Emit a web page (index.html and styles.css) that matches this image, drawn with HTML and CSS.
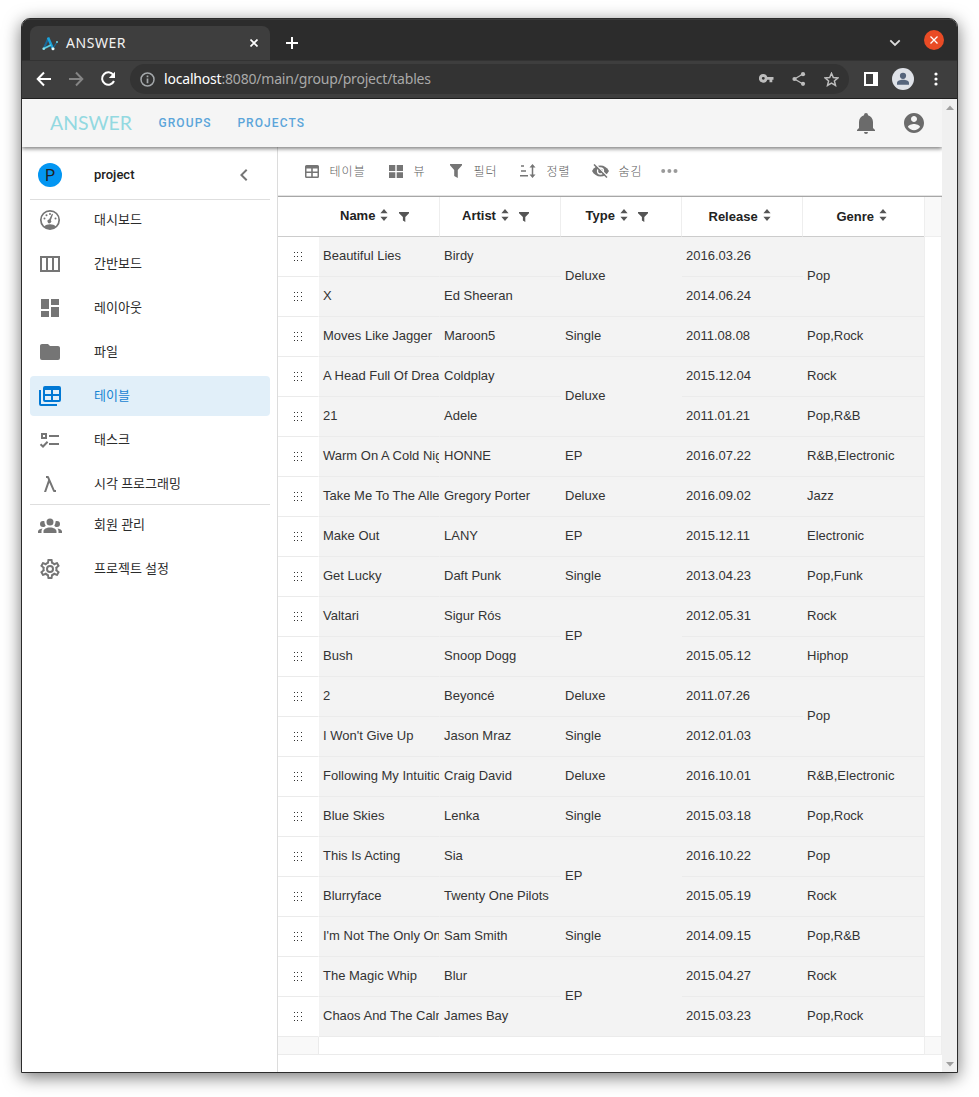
FILE: index.html
```html
<!DOCTYPE html>
<html lang="ko">
<head>
<meta charset="utf-8">
<title>ANSWER</title>
<link rel="stylesheet" href="styles.css">
</head>
<body>
<svg class="defs" aria-hidden="true">
  <symbol id="sort" viewBox="0 0 8 12"><path d="M4 0L7.6 4.2H.4zM4 12L7.6 7.8H.4z"/></symbol>
  <symbol id="funnel" viewBox="0 0 12 14"><path d="M0 0H12V1.2L7.8 6V14L4.2 12V6L0 1.2z"/></symbol>
  <symbol id="funnel-small" viewBox="0 0 10 10"><path d="M0 0H10V1.2L6.3 5V10L3.900 8.500V5L0 1.200z"/></symbol>
  <symbol id="grip" viewBox="0 0 8 10"><path d="M0 0h1v1H0zM3 0h1v1H3zM7 0h1v1H7zM0 4h1v1H0zM3 4h1v1H3zM7 4h1v1H7zM0 8h1v1H0zM3 8h1v1H3zM7 8h1v1H7z"/></symbol>
</svg>
<div class="window">
  <div class="tabstrip">
    <div class="tab">
      <svg class="favicon" width="17" height="15" viewBox="0 0 17 15"><path d="M2 12L6.500 2" fill="none" stroke="#17699a" stroke-width="2"/><path d="M6 1.500L10.800 12.500" fill="none" stroke="#1ba3dc" stroke-width="2.600"/><path d="M1.500 12.800L9 9" stroke="#59cfe6" stroke-width="1.800"/><path d="M11 12.500L15 6" stroke="#176a96" stroke-width="1.200"/><circle cx="1.700" cy="12.800" r="1.300" fill="#8fe4ef"/><circle cx="11" cy="12.800" r="1.500" fill="#e9ffff"/><circle cx="15" cy="6" r="1.100" fill="#6cd"/></svg>
      <span class="tab-title">ANSWER</span>
      <svg class="tab-close" width="8" height="8" viewBox="0 0 8 8"><path d="M.5.5l7 7M7.500.5l-7 7" stroke="#fff" stroke-width="1.700"/></svg>
    </div>
    <svg class="tab-new" width="12" height="12" viewBox="0 0 12 12"><path d="M6 0v12M0 6h12" stroke="#fff" stroke-width="2"/></svg>
    <svg class="tab-menu" width="12" height="8" viewBox="0 0 12 8"><path d="M1.300 1.300L6 6l4.700-4.700" fill="none" stroke="#ddd" stroke-width="1.800"/></svg>
    <span class="win-close"><svg width="8" height="8" viewBox="0 0 8 8"><path d="M.5.5l7 7M7.500.5l-7 7" stroke="#fff" stroke-width="1.300"/></svg></span>
  </div>
  <div class="navbar">
    <svg class="nav-back" width="16" height="16" viewBox="0 0 16 16"><path d="M15 8H2M8 1.500L1.700 8 8 14.500" fill="none" stroke="#fff" stroke-width="2"/></svg>
    <svg class="nav-fwd" width="16" height="16" viewBox="0 0 16 16"><path d="M1 8h13M8 1.500L14.300 8 8 14.500" fill="none" stroke="#858585" stroke-width="2"/></svg>
    <svg class="nav-reload" width="16" height="16" viewBox="0 0 16 16"><path d="M13.400 4A6.200 6.200 0 1 0 14 10" fill="none" stroke="#fff" stroke-width="2"/><path d="M15 .8V7H8.800z" fill="#fff"/></svg>
    <div class="omnibox">
      <svg class="info" width="15" height="15" viewBox="0 0 15 15"><circle cx="7.500" cy="7.500" r="6.500" fill="none" stroke="#a3a7aa" stroke-width="1.500"/><path d="M7.500 6.500V11.300M7.500 3.500v1.700" stroke="#a3a7aa" stroke-width="1.700"/></svg>
      <span class="url"><b>localhost</b>:8080/main/group/project/tables</span>
      <svg class="key" width="15" height="9" viewBox="0 0 15 9"><path fill="#bdbdbd" fill-rule="evenodd" d="M4.300 0a4.300 4.300 0 1 0 4 5.700H10.500V8.300H13.300V5.700H14.500V3H8.300A4.300 4.300 0 0 0 4.300 0zm0 2.900a1.400 1.400 0 1 1 0 2.900 1.400 1.400 0 0 1 0-2.900z"/></svg>
      <svg class="share" width="14" height="14" viewBox="0 0 14 14"><path d="M11 2L2.500 7 11 12" fill="none" stroke="#bdbdbd" stroke-width="1.300"/><g fill="#bdbdbd"><circle cx="11" cy="2.200" r="2.100"/><circle cx="2.500" cy="7" r="2.100"/><circle cx="11" cy="11.800" r="2.100"/></g></svg>
      <svg class="star" width="15" height="15" viewBox="0 0 15 15"><path d="M7.500 1.300l1.800 4.200 4.600.4-3.500 3 1.100 4.500-4-2.400-4 2.400 1.100-4.500-3.500-3 4.600-.4z" fill="none" stroke="#bdbdbd" stroke-width="1.500"/></svg>
    </div>
    <svg class="side" width="14" height="14" viewBox="0 0 14 14"><path fill="#fff" fill-rule="evenodd" d="M0 0h14v14H0zM2 2v10h7V2z"/></svg>
    <svg class="profile" width="22" height="22" viewBox="0 0 22 22"><circle cx="11" cy="11" r="11" fill="#dfe2e8"/><circle cx="11" cy="7.800" r="3.100" fill="#56657c"/><path d="M5 16.700V15c0-2 3-3.200 6-3.200s6 1.200 6 3.200v1.700z" fill="#56657c"/></svg>
    <svg class="dots" width="4" height="14" viewBox="0 0 4 14"><g fill="#fff"><circle cx="2" cy="2" r="1.600"/><circle cx="2" cy="7" r="1.600"/><circle cx="2" cy="12" r="1.600"/></g></svg>
  </div>
  <div class="viewport">
    <div class="page">
      <header class="appbar">
        <svg class="logo" width="84" height="20" viewBox="0 0 84 20"><text x="0" y="17" textLength="82" lengthAdjust="spacingAndGlyphs">ANSWER</text></svg>
        <a class="link">GROUPS</a>
        <a class="link">PROJECTS</a>
        <svg class="bell" width="24" height="24" viewBox="0 0 24 24"><path d="M21 19V20H3V19L5 17V11C5 7.900 7.030 5.170 10 4.290V4A2 2 0 0 1 14 4V4.290C16.970 5.170 19 7.900 19 11V17L21 19M14 21A2 2 0 0 1 10 21"/></svg>
        <svg class="account" width="24" height="24" viewBox="0 0 24 24"><path d="M12 2C6.480 2 2 6.480 2 12s4.480 10 10 10 10-4.480 10-10S17.520 2 12 2zm0 3c1.660 0 3 1.340 3 3s-1.340 3-3 3-3-1.340-3-3 1.340-3 3-3zm0 14.200c-2.500 0-4.710-1.280-6-3.220.03-1.990 4-3.080 6-3.080 1.990 0 5.970 1.090 6 3.080-1.290 1.940-3.500 3.220-6 3.220z"/></svg>
      </header>
      <div class="body">
        <nav class="sidebar">
          <div class="project"><span class="avatar">P</span><span class="pname">project</span><svg width="24" height="24" viewBox="0 0 24 24"><path d="M15.410 16.580L10.830 12L15.410 7.410L14 6L8 12L14 18z"/></svg></div>
          <div class="group">
            <a class="item"><svg width="24" height="24" viewBox="0 0 24 24"><circle cx="12" cy="12" r="9.200" fill="none" stroke="#757575" stroke-width="1.700"/><path d="M6 18.500C9 15.500 15 15.500 18 18.500 15 22 9 22 6 18.500z"/><path d="M15 6.200L12.900 12.200A1.900 1.900 0 1 1 11.100 11.500L14 5.700z"/><circle cx="6.500" cy="10.500" r="1"/><circle cx="8.500" cy="7.300" r="1"/><circle cx="12" cy="6" r="1"/><circle cx="17.500" cy="10.500" r="1"/></svg>대시보드</a>
            <a class="item"><svg width="24" height="24" viewBox="0 0 24 24"><path d="M3 5H21V19H3zM9 5V19M15 5V19" fill="none" stroke="#757575" stroke-width="2"/></svg>간반보드</a>
            <a class="item"><svg width="24" height="24" viewBox="0 0 24 24"><path d="M13 3V9H21V3M13 21H21V11H13M3 21H11V15H3M3 13H11V3H3z"/></svg>레이아웃</a>
            <a class="item"><svg width="24" height="24" viewBox="0 0 24 24"><path d="M10 4H4C2.890 4 2 4.890 2 6V18A2 2 0 0 0 4 20H20A2 2 0 0 0 22 18V8C22 6.890 21.100 6 20 6H12z"/></svg>파일</a>
            <a class="item active"><svg width="24" height="24" viewBox="0 0 24 24"><path fill-rule="evenodd" d="M7 2H21A2 2 0 0 1 23 4V16A2 2 0 0 1 21 18H7A2 2 0 0 1 5 16V4A2 2 0 0 1 7 2zM7 6V10H13V6zM15 6V10H21V6zM7 12V16H13V12zM15 12V16H21V12z"/><path d="M1 6H3V20H19V22H3A2 2 0 0 1 1 20z"/></svg>테이블</a>
            <a class="item"><svg width="24" height="24" viewBox="0 0 24 24"><path fill-rule="evenodd" d="M3 5H9V11H3zM5 7V9H7V7zM11 7H21V9H11zM11 15H21V17H11z"/><path d="M2.500 16.200L5 18.500 9.600 13.800" fill="none" stroke="#757575" stroke-width="2"/></svg>태스크</a>
            <a class="item"><svg width="24" height="24" viewBox="0 0 24 24"><path d="M6 20L10.160 7.910L9.340 6H8V4H10C10.420 4 10.780 4.260 10.930 4.630L16.660 18H18V20H16C15.570 20 15.210 19.730 15.070 19.360L11.330 10.650L8.120 20z"/></svg>시각 프로그래밍</a>
          </div>
          <div class="group admin">
            <a class="item"><svg width="24" height="24" viewBox="0 0 24 24"><path d="M12,5.5A3.5,3.5 0 0,1 15.5,9A3.5,3.5 0 0,1 12,12.5A3.5,3.5 0 0,1 8.5,9A3.5,3.5 0 0,1 12,5.5M5,8C5.56,8 6.08,8.15 6.53,8.42C6.38,9.85 6.8,11.27 7.66,12.38C7.16,13.34 6.16,14 5,14A3,3 0 0,1 2,11A3,3 0 0,1 5,8M19,8A3,3 0 0,1 22,11A3,3 0 0,1 19,14C17.84,14 16.84,13.34 16.34,12.38C17.2,11.27 17.62,9.85 17.47,8.42C17.92,8.15 18.44,8 19,8M5.5,18.25C5.5,16.18 8.41,14.5 12,14.5C15.59,14.5 18.5,16.18 18.5,18.25V20H5.5V18.25M0,20V18.5C0,17.11 1.89,15.94 4.45,15.6C3.86,16.28 3.5,17.22 3.5,18.25V20H0M24,20H20.5V18.25C20.5,17.22 20.14,16.28 19.55,15.6C22.11,15.94 24,17.11 24,18.5V20Z"/></svg>회원 관리</a>
            <a class="item"><svg width="24" height="24" viewBox="0 0 24 24"><path d="M12,8A4,4 0 0,1 16,12A4,4 0 0,1 12,16A4,4 0 0,1 8,12A4,4 0 0,1 12,8M12,10A2,2 0 0,0 10,12A2,2 0 0,0 12,14A2,2 0 0,0 14,12A2,2 0 0,0 12,10M10,22C9.75,22 9.54,21.82 9.5,21.58L9.13,18.93C8.5,18.68 7.96,18.34 7.44,17.94L4.95,18.95C4.73,19.03 4.46,18.95 4.34,18.73L2.34,15.27C2.21,15.05 2.27,14.78 2.46,14.63L4.57,12.97L4.5,12L4.57,11L2.46,9.37C2.27,9.22 2.21,8.95 2.34,8.73L4.34,5.27C4.46,5.05 4.73,4.96 4.95,5.05L7.44,6.05C7.96,5.66 8.5,5.32 9.13,5.07L9.5,2.42C9.54,2.18 9.75,2 10,2H14C14.25,2 14.46,2.18 14.5,2.42L14.87,5.07C15.5,5.32 16.04,5.66 16.56,6.05L19.05,5.05C19.27,4.96 19.54,5.05 19.66,5.27L21.66,8.73C21.79,8.95 21.73,9.22 21.54,9.37L19.43,11L19.5,12L19.43,13L21.54,14.63C21.73,14.78 21.79,15.05 21.66,15.27L19.66,18.73C19.54,18.95 19.27,19.04 19.05,18.95L16.56,17.95C16.04,18.34 15.5,18.68 14.87,18.93L14.5,21.58C14.46,21.82 14.25,22 14,22H10M11.25,4L10.88,6.61C9.68,6.86 8.62,7.5 7.85,8.39L5.44,7.35L4.69,8.65L6.8,10.2C6.4,11.37 6.4,12.64 6.8,13.8L4.68,15.36L5.43,16.66L7.86,15.62C8.63,16.5 9.68,17.14 10.87,17.38L11.24,20H12.76L13.13,17.39C14.32,17.14 15.37,16.5 16.14,15.62L18.57,16.66L19.32,15.36L17.2,13.81C17.6,12.64 17.6,11.37 17.2,10.2L19.31,8.65L18.56,7.35L16.15,8.39C15.38,7.5 14.32,6.86 13.12,6.62L12.75,4H11.25Z"/></svg>프로젝트 설정</a>
          </div>
        </nav>
        <main class="main">
          <div class="toolbar">
            <span class="tool t-table"><svg width="14" height="13" viewBox="0 0 14 13"><path fill-rule="evenodd" d="M1.500 0H12.500A1.500 1.500 0 0 1 14 1.500V11.500A1.500 1.500 0 0 1 12.500 13H1.500A1.500 1.500 0 0 1 0 11.500V1.500A1.500 1.500 0 0 1 1.500 0zM1.500 3.500V6.500H6.200V3.500zM7.800 3.500V6.500H12.500V3.500zM1.500 8V11.500H6.200V8zM7.800 8V11.500H12.500V8z"/></svg><span>테이블</span></span>
            <span class="tool t-view"><svg width="14" height="13" viewBox="0 0 14 13"><path d="M0 0H6.300V6H0zM7.700 0H14V6H7.700zM0 7.200H6.300V13H0zM7.700 7.200H14V13H7.700z"/></svg><span>뷰</span></span>
            <span class="tool t-filter"><svg width="12" height="14"><use href="#funnel"/></svg><span>필터</span></span>
            <span class="tool t-sort"><svg width="16" height="14" viewBox="0 0 16 14"><path d="M1 2H4M1 7H6M0 11.800H8" stroke="#757575" stroke-width="1.400"/><path d="M12.500 2V12" stroke="#757575" stroke-width="1.500"/><path d="M12.500 0L15.500 3.400H9.500zM12.500 14L15.500 10.600H9.500z"/></svg><span>정렬</span></span>
            <span class="tool t-hide"><svg width="17" height="14" viewBox="0 0 17 14"><path d="M0 7C2 3.400 5 1.500 8.500 1.500S15 3.400 17 7C15 10.600 12 12.500 8.500 12.500S2 10.600 0 7z"/><circle cx="8.500" cy="7" r="3" fill="none" stroke="#fff" stroke-width="1.300"/><path d="M3.200 0L15.500 12.300" stroke="#fff" stroke-width="1.500"/><path d="M2 .5L15 13.500" stroke="#757575" stroke-width="1.500"/></svg><span>숨김</span></span>
            <svg class="more" width="17" height="4" viewBox="0 0 17 4"><g fill="#9a9a9a"><circle cx="2.200" cy="2" r="2"/><circle cx="8.400" cy="2" r="2"/><circle cx="14.500" cy="2" r="2"/></g></svg>
          </div>
          <div class="gridwrap">
            <table class="grid">
              <colgroup><col class="c-grip"><col><col><col><col><col></colgroup>
              <thead><tr>
                <th class="h-grip"></th>
                <th><div class="h h-name">Name<svg class="s"><use href="#sort"/></svg><svg class="f"><use href="#funnel-small"/></svg></div></th>
                <th><div class="h h-artist">Artist<svg class="s"><use href="#sort"/></svg><svg class="f"><use href="#funnel-small"/></svg></div></th>
                <th><div class="h h-type">Type<svg class="s"><use href="#sort"/></svg><svg class="f"><use href="#funnel-small"/></svg></div></th>
                <th><div class="h h-release"><span>Release</span><svg class="s"><use href="#sort"/></svg></div></th>
                <th><div class="h h-genre"><span>Genre</span><svg class="s"><use href="#sort"/></svg></div></th>
              </tr></thead>
              <tbody>
                <tr><td class="g"><svg><use href="#grip"/></svg></td><td>Beautiful Lies</td><td>Birdy</td><td rowspan="2">Deluxe</td><td>2016.03.26</td><td rowspan="2">Pop</td></tr>
                <tr><td class="g"><svg><use href="#grip"/></svg></td><td>X</td><td>Ed Sheeran</td><td>2014.06.24</td></tr>
                <tr><td class="g"><svg><use href="#grip"/></svg></td><td>Moves Like Jagger</td><td>Maroon5</td><td>Single</td><td>2011.08.08</td><td>Pop,Rock</td></tr>
                <tr><td class="g"><svg><use href="#grip"/></svg></td><td>A Head Full Of Dreams</td><td>Coldplay</td><td rowspan="2">Deluxe</td><td>2015.12.04</td><td>Rock</td></tr>
                <tr><td class="g"><svg><use href="#grip"/></svg></td><td>21</td><td>Adele</td><td>2011.01.21</td><td>Pop,R&amp;B</td></tr>
                <tr><td class="g"><svg><use href="#grip"/></svg></td><td>Warm On A Cold Night</td><td>HONNE</td><td>EP</td><td>2016.07.22</td><td>R&amp;B,Electronic</td></tr>
                <tr><td class="g"><svg><use href="#grip"/></svg></td><td>Take Me To The Alley</td><td>Gregory Porter</td><td>Deluxe</td><td>2016.09.02</td><td>Jazz</td></tr>
                <tr><td class="g"><svg><use href="#grip"/></svg></td><td>Make Out</td><td>LANY</td><td>EP</td><td>2015.12.11</td><td>Electronic</td></tr>
                <tr><td class="g"><svg><use href="#grip"/></svg></td><td>Get Lucky</td><td>Daft Punk</td><td>Single</td><td>2013.04.23</td><td>Pop,Funk</td></tr>
                <tr><td class="g"><svg><use href="#grip"/></svg></td><td>Valtari</td><td>Sigur Rós</td><td rowspan="2">EP</td><td>2012.05.31</td><td>Rock</td></tr>
                <tr><td class="g"><svg><use href="#grip"/></svg></td><td>Bush</td><td>Snoop Dogg</td><td>2015.05.12</td><td>Hiphop</td></tr>
                <tr><td class="g"><svg><use href="#grip"/></svg></td><td>2</td><td>Beyoncé</td><td>Deluxe</td><td>2011.07.26</td><td rowspan="2">Pop</td></tr>
                <tr><td class="g"><svg><use href="#grip"/></svg></td><td>I Won't Give Up</td><td>Jason Mraz</td><td>Single</td><td>2012.01.03</td></tr>
                <tr><td class="g"><svg><use href="#grip"/></svg></td><td>Following My Intuition</td><td>Craig David</td><td>Deluxe</td><td>2016.10.01</td><td>R&amp;B,Electronic</td></tr>
                <tr><td class="g"><svg><use href="#grip"/></svg></td><td>Blue Skies</td><td>Lenka</td><td>Single</td><td>2015.03.18</td><td>Pop,Rock</td></tr>
                <tr><td class="g"><svg><use href="#grip"/></svg></td><td>This Is Acting</td><td>Sia</td><td rowspan="2">EP</td><td>2016.10.22</td><td>Pop</td></tr>
                <tr><td class="g"><svg><use href="#grip"/></svg></td><td>Blurryface</td><td>Twenty One Pilots</td><td>2015.05.19</td><td>Rock</td></tr>
                <tr><td class="g"><svg><use href="#grip"/></svg></td><td>I'm Not The Only One</td><td>Sam Smith</td><td>Single</td><td>2014.09.15</td><td>Pop,R&amp;B</td></tr>
                <tr><td class="g"><svg><use href="#grip"/></svg></td><td>The Magic Whip</td><td>Blur</td><td rowspan="2">EP</td><td>2015.04.27</td><td>Rock</td></tr>
                <tr><td class="g"><svg><use href="#grip"/></svg></td><td>Chaos And The Calm</td><td>James Bay</td><td>2015.03.23</td><td>Pop,Rock</td></tr>
              </tbody>
              <tfoot><tr><td class="foot-grip"></td><td class="foot" colspan="5"></td></tr></tfoot>
            </table>
            <div class="gutter"><div class="g-top"></div><div class="g-mid"></div><div class="g-bot"></div></div>
          </div>
        </main>
      </div>
    </div>
    <div class="scrollbar">
      <svg width="8" height="5" viewBox="0 0 8 5"><path d="M0 5L4 .5 8 5z"/></svg>
      <svg width="8" height="5" viewBox="0 0 8 5"><path d="M0 0L4 4.500 8 0z"/></svg>
    </div>
  </div>
</div>
</body>
</html>
```

FILE: styles.css
```css
* { box-sizing: border-box; }
body { margin: 0; padding: 18px 21px 24px; background: #fff; font-family: Roboto, "Noto Sans CJK KR", sans-serif; overflow: hidden; }
svg { display: block; flex: none; fill: #757575; }
.defs { position: absolute; width: 0; height: 0; }
.window { width: 937px; height: 1055px; border: 1px solid #2b2b2b; border-radius: 9px 9px 0 0; overflow: hidden; background: #fff; box-shadow: 0 4px 17px rgba(0,0,0,.55); display: flex; flex-direction: column; }

.tabstrip { height: 41px; flex: none; background: #2c2c2c; display: flex; align-items: flex-start; padding: 7px 0 0 8px; box-shadow: inset 0 1px #3d3d3d; }
.tab { width: 240px; height: 34px; border-radius: 8px 8px 0 0; background: #3e3e3e; display: flex; align-items: center; padding: 0 12px; }
.tab-title { font: 14px/18px "Noto Sans", sans-serif; color: #f2f2f2; margin-left: 7px; flex: 1; letter-spacing: .55px; }
.tab-new { margin: 11px 0 0 16px; }
.tab-menu { margin: 13px 0 0 auto; }
.win-close { width: 20px; height: 20px; margin: 4px 13px 0 23px; border-radius: 50%; background: #e94b25; display: flex; align-items: center; justify-content: center; }

.navbar { height: 39px; flex: none; background: #3e3e3e; border-bottom: 1px solid #1f1f1f; border-top: 1px solid #333; display: flex; align-items: center; padding: 0 0 1px 14px; }
.nav-fwd { margin-left: 16px; }
.nav-reload { margin-left: 16px; }
.omnibox { margin-left: 14px; width: 719px; height: 30px; border-radius: 15px; background: #333; display: flex; align-items: center; padding-left: 10px; }
.url { margin-left: 9px; flex: 1; font: 14px/20px "Noto Sans", sans-serif; letter-spacing: -.19px; color: #a9a9a9; white-space: nowrap; }
.url b { font-weight: 400; color: #fff; }
.key { margin-top: -1px; }
.share { margin-left: 18px; }
.star { margin: 0 10px 0 18px; }
.side { margin-left: 15px; }
.profile { margin-left: 14px; }
.dots { margin-left: 20px; }

.viewport { flex: 1; display: flex; min-height: 0; }
.page { width: 920px; display: flex; flex-direction: column; overflow: hidden; }
.scrollbar { flex: 1; background: #f0f0f0; display: flex; flex-direction: column; justify-content: space-between; align-items: center; padding: 6px 0 5px; }
.scrollbar svg { fill: #a0a0a0; }

.appbar { position: relative; z-index: 1; height: 48px; flex: none; background: #f5f5f5; box-shadow: 0 2px 4px rgba(0,0,0,.3), 0 1px 4px rgba(0,0,0,.3); display: flex; align-items: center; padding: 0 16px 0 28px; }
.logo text { font: 400 19px Lato, sans-serif; fill: #93d9e1; }
.link { font: 500 12px/16px Roboto, sans-serif; letter-spacing: 1.07px; color: #5ca5da; margin-left: 25.700px; }
.logo + .link { margin-left: 24.500px; }
.bell { margin-left: auto; }
.account { margin-left: 24px; }
.appbar svg path { fill: #6b6b6b; }

.body { flex: 1; display: flex; min-height: 0; }
.sidebar { width: 256px; flex: none; border-right: 1px solid #dcdcdc; padding: 8px 7px 0 8px; }
.project { height: 45px; display: flex; align-items: center; padding: 0 14px 4px 8px; border-bottom: 1px solid #dedede; }
.avatar { width: 24px; height: 24px; border-radius: 50%; background: #0396f2; color: #212121; font-size: 16px; line-height: 25px; text-align: center; }
.pname { margin: -2px 0 0 32px; flex: 1; font-size: 13px; font-weight: 500; color: #212121; }
.group { display: flex; flex-direction: column; gap: 4px; }
.item { height: 40px; border-radius: 4px; display: flex; align-items: center; padding-left: 8px; gap: 32px; font: 13px/20px Roboto, "Noto Sans CJK KR", sans-serif; color: #2b2b2b; }
.item.active { background: #e1eff9; color: #1784d3; }
.item.active svg { fill: #0078d4; }
.admin { border-top: 1px solid #dedede; }

.main { flex: 1; display: flex; flex-direction: column; }
.toolbar { height: 49px; flex: none; display: flex; align-items: center; padding-left: 27px; border-bottom: 1px solid #e3e3e3; }
.tool { display: flex; align-items: center; font: 300 12px/18px Roboto, "Noto Sans CJK KR", sans-serif; letter-spacing: 1.07px; color: #606060; gap: 10.500px; }
.tool span { padding-top: 2px; }
.t-table { width: 84px; }
.t-view { width: 60.500px; }
.t-filter { width: 70.500px; gap: 12px; }
.t-sort { width: 72px; }
.t-hide { width: 69px; gap: 9.500px; }
.gridwrap { display: flex; width: 664px; border-top: 1px solid #a7a7a7; }
.grid { width: 646px; flex: none; table-layout: fixed; border-collapse: separate; border-spacing: 0; font: 13px/16px "Liberation Sans", Arial, sans-serif; color: #333; }
.c-grip { width: 41px; }
.grid th { height: 40px; padding: 0; border-bottom: 1px solid #ccc; border-right: 1px solid #eee; color: #222; }
.grid th.h-grip { border-right: 0; }
.grid th:last-child { border-right: 0; }
.h { display: flex; align-items: center; padding-bottom: 2px; }
.h .s { width: 8px; height: 12px; margin: -1px 0 0 5px; fill: #555; }
.h .f { width: 10px; height: 10px; margin: 3px 0 0 10.500px; fill: #555; }
.h-name { padding-left: 21px; }
.h-artist { padding-left: 22px; }
.h-type { padding-left: 24.500px; }
.h-release { padding-left: 26.500px; }
.h-genre { padding-left: 33.500px; }
.h span { margin-top: 2px; }
.grid tbody td { height: 40px; padding: 0 0 1px 4px; border-bottom: 1px solid #ebebeb; background: #f3f3f3; white-space: nowrap; overflow: hidden; }
.grid tbody td:nth-child(2) { border-right: 1px solid #f3f3f3; }
.grid tbody td.g { padding: 0 0 0 17px; background: #fff; border-right: 1px solid #fff; }
.g svg { width: 8px; height: 10px; margin-left: -1px; fill: #333; shape-rendering: crispEdges; }
.grid tfoot td { height: 18px; padding: 0; border-bottom: 1px solid #ebebeb; }
.grid .foot-grip { background: #f9f9f9; border-right: 1px solid #ebebeb; }
.gutter { width: 18px; flex: none; display: flex; flex-direction: column; border-left: 1px solid #eee; border-right: 1px solid #eee; }
.g-top { height: 40px; background: #f9f9f9; border-bottom: 1px solid #eee; }
.g-mid { height: 800px; border-bottom: 1px solid #eee; }
.g-bot { height: 18px; background: #f9f9f9; border-bottom: 1px solid #eee; }
```
